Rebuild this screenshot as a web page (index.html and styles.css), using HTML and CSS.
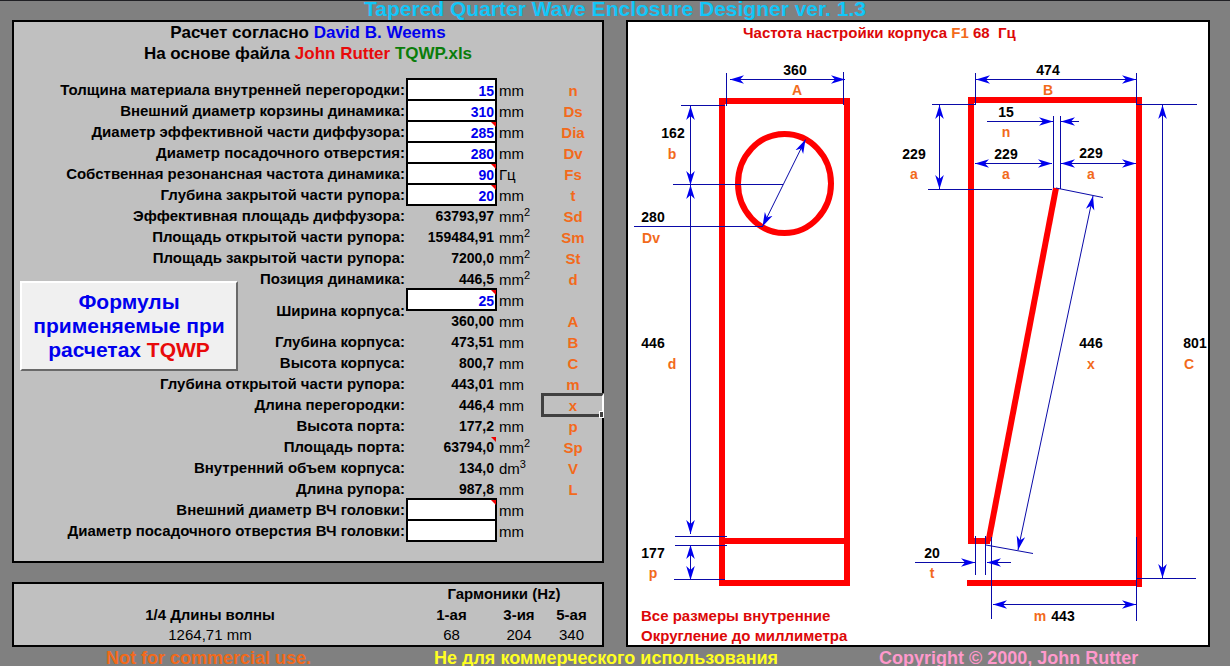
FILE: index.html
```html
<!DOCTYPE html>
<html lang="ru">
<head>
<meta charset="utf-8">
<title>Tapered Quarter Wave Enclosure Designer</title>
<link rel="stylesheet" href="styles.css">
</head>
<body>
<h1 class="title">Tapered Quarter Wave Enclosure Designer ver. 1.3</h1>
<main class="sheet">
  <div class="left">
    <section class="panel calc">
      <p class="credit">Расчет согласно <span class="blue">David B. Weems</span></p>
      <p class="credit">На основе файла <span class="red">John Rutter</span> <span class="green">TQWP.xls</span></p>
      <table class="grid params">
        <colgroup><col><col class="c-value"><col class="c-unit"><col class="c-sym"></colgroup>
        <tbody>
        <tr><th scope="row"><label for="n">Толщина материала внутренней перегородки:</label></th><td class="box"><input id="n" value="15"></td><td class="unit">mm</td><td class="sym">n</td></tr>
        <tr><th scope="row"><label for="ds">Внешний диаметр корзины динамика:</label></th><td class="box"><input id="ds" value="310"></td><td class="unit">mm</td><td class="sym">Ds</td></tr>
        <tr><th scope="row"><label for="dia">Диаметр эффективной части диффузора:</label></th><td class="box note"><input id="dia" value="285"></td><td class="unit">mm</td><td class="sym">Dia</td></tr>
        <tr><th scope="row"><label for="dv">Диаметр посадочного отверстия:</label></th><td class="box"><input id="dv" value="280"></td><td class="unit">mm</td><td class="sym">Dv</td></tr>
        <tr><th scope="row"><label for="fs">Собственная резонансная частота динамика:</label></th><td class="box note"><input id="fs" value="90"></td><td class="unit">Гц</td><td class="sym">Fs</td></tr>
        <tr><th scope="row"><label for="t">Глубина закрытой части рупора:</label></th><td class="box note"><input id="t" value="20"></td><td class="unit">mm</td><td class="sym">t</td></tr>
        <tr><th scope="row">Эффективная площадь диффузора:</th><td class="value">63793,97</td><td class="unit">mm<sup>2</sup></td><td class="sym">Sd</td></tr>
        <tr><th scope="row">Площадь открытой части рупора:</th><td class="value">159484,91</td><td class="unit">mm<sup>2</sup></td><td class="sym">Sm</td></tr>
        <tr><th scope="row">Площадь закрытой части рупора:</th><td class="value">7200,0</td><td class="unit">mm<sup>2</sup></td><td class="sym">St</td></tr>
        <tr><th scope="row">Позиция динамика:</th><td class="value">446,5</td><td class="unit">mm<sup>2</sup></td><td class="sym">d</td></tr>
        <tr><th scope="row" rowspan="2"><label for="w">Ширина корпуса:</label></th><td class="box note"><input id="w" value="25"></td><td class="unit">mm</td><td class="sym"></td></tr>
        <tr><td class="value">360,00</td><td class="unit">mm</td><td class="sym">A</td></tr>
        <tr><th scope="row">Глубина корпуса:</th><td class="value">473,51</td><td class="unit">mm</td><td class="sym">B</td></tr>
        <tr><th scope="row">Высота корпуса:</th><td class="value">800,7</td><td class="unit">mm</td><td class="sym">C</td></tr>
        <tr><th scope="row">Глубина открытой части рупора:</th><td class="value">443,01</td><td class="unit">mm</td><td class="sym">m</td></tr>
        <tr><th scope="row">Длина перегородки:</th><td class="value">446,4</td><td class="unit">mm</td><td class="sym selected">x</td></tr>
        <tr><th scope="row">Высота порта:</th><td class="value">177,2</td><td class="unit">mm</td><td class="sym">p</td></tr>
        <tr><th scope="row">Площадь порта:</th><td class="value note">63794,0</td><td class="unit">mm<sup>2</sup></td><td class="sym">Sp</td></tr>
        <tr><th scope="row">Внутренний объем корпуса:</th><td class="value">134,0</td><td class="unit">dm<sup>3</sup></td><td class="sym">V</td></tr>
        <tr><th scope="row">Длина рупора:</th><td class="value">987,8</td><td class="unit">mm</td><td class="sym">L</td></tr>
        <tr><th scope="row"><label for="hf">Внешний диаметр ВЧ головки:</label></th><td class="box note"><input id="hf" value=""></td><td class="unit">mm</td><td class="sym"></td></tr>
        <tr><th scope="row"><label for="hfv">Диаметр посадочного отверстия ВЧ головки:</label></th><td class="box"><input id="hfv" value=""></td><td class="unit">mm</td><td class="sym"></td></tr>
        </tbody>
      </table>
      <button class="formulas" type="button"><span class="line">Формулы</span> <span class="line">применяемые при</span> <span class="line"><span>расчетах</span> <span class="red">TQWP</span></span></button>
    </section>
    <section class="panel">
      <table class="grid harmonics">
        <colgroup><col><col class="c-value"><col class="c-unit"><col class="c-sym"></colgroup>
        <tbody>
        <tr><td></td><th colspan="3">Гармоники (Hz)</th></tr>
        <tr><th>1/4 Длины волны</th><th>1-ая</th><th>3-ия</th><th>5-ая</th></tr>
        <tr><td>1264,71 mm</td><td>68</td><td>204</td><td>340</td></tr>
        </tbody>
      </table>
    </section>
  </div>
  <section class="panel plan">
    <svg class="drawing" viewBox="628 22 580 623" role="img" aria-label="Чертеж корпуса">
      <defs>
        <marker id="arrow" viewBox="-14 -5 15 10" refX="0" refY="0" markerWidth="15" markerHeight="10" markerUnits="userSpaceOnUse" orient="auto-start-reverse">
          <path class="head" d="M0 0L-14 -4.3L-10 0L-14 4.3Z"/>
        </marker>
      </defs>
      <g class="wall">
        <path d="M722 101H847V583H722ZM722 541H847"/>
        <ellipse cx="784.5" cy="183.5" rx="46.5" ry="49.5"/>
        <path d="M988.500 541L1056 188"/>
        <path d="M990 541H971V100H1139V587M971 538V544M967 583H1139"/>
      </g>
      <g class="ext">
        <path d="M726.500 73V106M843.500 72V105M681 105.500H725M673 184.500H783M634 226.500H763M675 536.500H727M675 545.500H727M674 579.500H725"/>
        <path d="M975.500 73V104M1136.500 73V105M932 104.500H976M1137 104.500H1197M928 189.500H1052M1053.500 116V188M1060.500 116V189M1056 188L1103 197.500M986 545L1033 553.500M1137 578.500H1196M975.500 536V575M985.500 536V575M991.500 537V619M1136.500 537V621"/>
      </g>
      <g class="dim">
        <path d="M730 79.500H845"/>
        <path d="M690.500 106V185"/>
        <path d="M690.500 185V534"/>
        <path d="M690.500 545V580"/>
        <path d="M805.500 139.500L762.500 226.500"/>
        <path d="M976 79.500H1136"/>
        <path d="M939.500 105V189"/>
        <path d="M975 163.500H1052"/>
        <path d="M1061 163.500H1136"/>
        <path d="M1093 196L1018 550"/>
        <path d="M1162.500 105V578"/>
        <path d="M993 604.500H1136"/>
      </g>
      <g class="dim-end">
        <path d="M987 121.500H1053"/>
        <path d="M1079 121.500H1061"/>
        <path d="M915 562.500H975"/>
        <path d="M1011 562.500H987"/>
      </g>
      <g class="num">
        <text x="795" y="75">360</text><text x="673" y="138">162</text><text x="653" y="222">280</text>
        <text x="653" y="348">446</text><text x="653" y="558">177</text><text x="1048" y="75">474</text>
        <text x="1006" y="117">15</text><text x="914" y="159">229</text><text x="1006" y="159">229</text>
        <text x="1091" y="158">229</text><text x="1091" y="348">446</text><text x="1195" y="348">801</text>
        <text x="932" y="558">20</text><text x="1063" y="621">443</text>
      </g>
      <g class="letter">
        <text x="797" y="95">A</text><text x="672" y="159">b</text><text x="651" y="243">Dv</text>
        <text x="672" y="369">d</text><text x="653" y="578">p</text><text x="1048" y="95">B</text>
        <text x="1006" y="137">n</text><text x="914" y="179">a</text><text x="1006" y="179">a</text>
        <text x="1091" y="179">a</text><text x="1091" y="369">x</text><text x="1189" y="369">C</text>
        <text x="932" y="578">t</text><text x="1040" y="621">m</text>
      </g>
      <g class="caption">
        <text x="743" y="38">Частота настройки корпуса <tspan class="f1">F1</tspan> 68&nbsp; Гц</text>
        <text x="641" y="621">Все размеры внутренние</text>
        <text x="641" y="641">Округление до миллиметра</text>
      </g>
    </svg>
  </section>
</main>
<footer class="footer">
  <span class="orange">Not for commercial use.</span>
  <span class="yellow">Не для коммерческого использования</span>
  <span class="pink">Copyright © 2000, John Rutter</span>
</footer>
</body>
</html>
```
FILE: styles.css
```css
* { box-sizing: border-box; }
html { background: #808080; }
body {
  margin: 0;
  height: 100vh;
  overflow: hidden;
  border-top: 1px solid #202024;
  font-family: "Liberation Sans", Arial, sans-serif;
  font-size: 15px;
  color: #000;
}
.title {
  margin: 0;
  height: 19px;
  line-height: 15px;
  font-size: 21px;
  text-align: center;
  white-space: nowrap;
  color: #12c6f8;
}
.sheet {
  display: grid;
  grid-template-columns: minmax(0, 592fr) minmax(0, 584fr);
  column-gap: 22px;
  padding: 0 20px 0 12px;
}
.left { display: flex; flex-direction: column; gap: 19px; }
.panel {
  position: relative;
  border: 2px solid #000;
  background: #c0c0c0;
}
.plan { background: #fff; }
.calc { padding-bottom: 20px; }
.credit {
  margin: 0;
  line-height: 21px;
  font-size: 17px;
  font-weight: bold;
  text-align: center;
}
.blue { color: #00e; }
.red { color: #e80a0a; }
.green { color: #0a7d0a; }

.grid {
  width: 100%;
  table-layout: fixed;
  border-collapse: separate;
  border-spacing: 0;
  line-height: 21px;
}
.grid td, .grid th { padding: 0; height: 21px; white-space: nowrap; }
.c-value { width: 91px; }
.c-unit { width: 44px; }
.c-sym { width: 61px; }
.params { margin-top: 15px; }
.params th { padding-right: 1px; text-align: right; }
.params .value, .params .unit, .params .sym { padding-top: 2px; line-height: 19px; }
.params .value {
  padding-right: 3px;
  font-size: 14px;
  font-weight: bold;
  text-align: right;
}
.params .unit { padding-left: 2px; }
.params sup { font-size: 11px; line-height: 0; vertical-align: 6px; }
.params .sym {
  position: relative;
  padding-left: 3px;
  text-align: center;
  font-weight: bold;
  color: #f26a1b;
}
.box input {
  display: block;
  width: 100%;
  height: 23px;
  margin: -1px 0;
  padding: 2px 1px 0 0;
  border: 2px solid #000;
  border-radius: 0;
  background: #fff;
  font: bold 14px "Liberation Sans", Arial, sans-serif;
  text-align: right;
  color: #00e;
}
.note { position: relative; }
.note::after {
  content: "";
  position: absolute;
  top: 1px;
  right: 1px;
  border-top: 5px solid #e00;
  border-left: 5px solid transparent;
}
.selected::before {
  content: "";
  position: absolute;
  inset: -1px -2px -2px 0;
  border: 3px solid #404040;
  border-right: 2px solid #fff;
}
.selected::after {
  content: "";
  position: absolute;
  right: -2px;
  bottom: -3px;
  width: 3px;
  height: 5px;
  border: 1px solid #fff;
  background: #404040;
}
.formulas {
  position: absolute;
  left: 6px;
  top: 259px;
  width: 218px;
  padding: 7px 8px;
  border: 2px solid;
  border-color: #fff #696969 #696969 #fff;
  background: #f0f0f0;
  font: bold 21px/24px "Liberation Sans", Arial, sans-serif;
  color: #00e;
}
.line { display: block; }
.harmonics { text-align: center; line-height: 20px; }
.harmonics td, .harmonics th { height: 20px; }
.harmonics tr:nth-child(2) th { height: 21px; }

.drawing { display: block; width: 100%; height: auto; }
.wall { fill: none; stroke: #f00; stroke-width: 6; }
.ext { fill: none; stroke: #0a0aa8; stroke-width: 1; }
.dim, .dim-end { fill: none; stroke: #0a0aa8; stroke-width: 1; }
.dim path { marker-start: url(#arrow); marker-end: url(#arrow); }
.dim-end path { marker-end: url(#arrow); }
.head { fill: #00e; stroke: none; }
.num, .letter { font-size: 14px; font-weight: bold; text-anchor: middle; }
.letter { fill: #f26a1b; }
.caption { font-size: 15px; font-weight: bold; fill: #dc0808; }
.f1 { fill: #f26a1b; }

.footer {
  display: grid;
  grid-template-columns: 328fr 445fr 351fr;
  padding-left: 106px;
  line-height: 23px;
  font-size: 18px;
  font-weight: bold;
  white-space: nowrap;
}
.orange { color: #f26a1b; }
.yellow { color: #ff2; }
.pink { color: #f9c; }
```
